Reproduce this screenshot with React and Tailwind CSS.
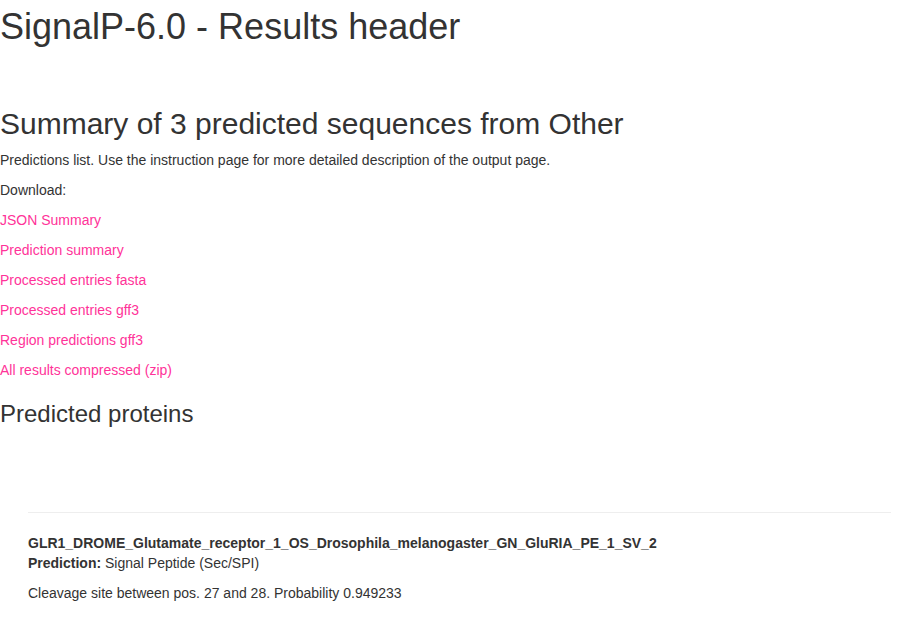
export default function App() {
  const links = [
    "JSON Summary",
    "Prediction summary",
    "Processed entries fasta",
    "Processed entries gff3",
    "Region predictions gff3",
    "All results compressed (zip)",
  ];
  return (
    <div className="w-[914px] h-[624px] bg-white text-[#333] text-[14px] leading-[20px] overflow-hidden" style={{ fontFamily: '"Liberation Sans", Arial, sans-serif' }}>
      <h1 className="text-[36px] leading-[1.1] pt-[7px] m-0">SignalP-6.0 - Results header</h1>
      <h2 className="text-[30px] leading-[1.1] mt-[60px]">Summary of 3 predicted sequences from Other</h2>
      <p className="mt-[10px] mb-[10px]">Predictions list. Use the instruction page for more detailed description of the output page.</p>
      <p className="mb-[10px]">Download:</p>
      {links.map((l, i) => (
        <p key={l} className={i === links.length - 1 ? "mb-0" : "mb-[10px]"}>
          <a className="text-[#ff3399]" href="#">{l}</a>
        </p>
      ))}
      <h3 className="text-[24px] leading-[1.1] mt-[21px]">Predicted proteins</h3>
      <div className="ml-[28px] w-[863px] mt-[85px]">
        <div className="h-px bg-[#eee]"></div>
        <div className="mt-[20px] font-bold">GLR1_DROME_Glutamate_receptor_1_OS_Drosophila_melanogaster_GN_GluRIA_PE_1_SV_2</div>
        <div><span className="font-bold">Prediction:</span> Signal Peptide (Sec/SPI)</div>
        <p className="mt-[10px]">Cleavage site between pos. 27 and 28. Probability 0.949233</p>
      </div>
    </div>
  );
}
